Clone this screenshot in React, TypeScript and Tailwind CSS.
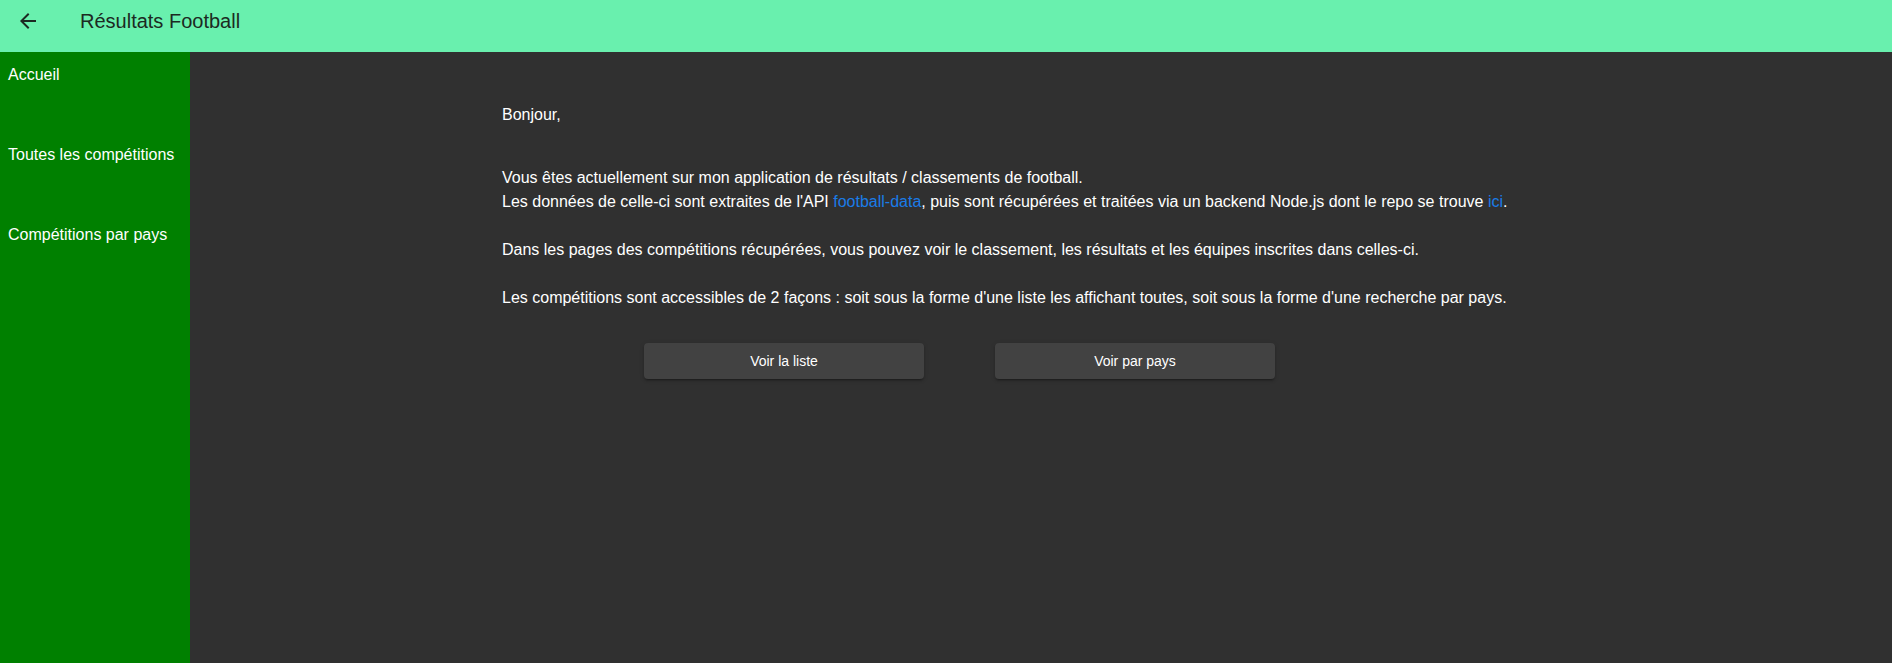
import React from "react";

export default function App() {
  return (
    <div className="flex h-[663px] w-[1892px] flex-col bg-[#303030] font-['Liberation_Sans',Arial,sans-serif] text-white">
      <header className="flex h-[52px] shrink-0 items-center bg-[#69f0ae] text-[#1c2a22]">
        <button className="ml-[16px] flex h-[24px] w-[24px] items-center justify-center -mt-[10px]">
          <svg viewBox="0 0 24 24" width="24" height="24" fill="currentColor">
            <path d="M20 11H7.83l5.59-5.59L12 4l-8 8 8 8 1.41-1.41L7.83 13H20v-2z" />
          </svg>
        </button>
        <h1 className="ml-[40px] -mt-[10px] text-[20px] leading-[24px]">Résultats Football</h1>
      </header>
      <div className="flex flex-1">
        <nav className="flex w-[190px] shrink-0 flex-col bg-[#008000] pt-[11px]">
          <a className="h-[80px] px-[8px] text-[16px] leading-[24px]">Accueil</a>
          <a className="h-[80px] px-[8px] text-[16px] leading-[24px]">Toutes les compétitions</a>
          <a className="h-[80px] px-[8px] text-[16px] leading-[24px]">Compétitions par pays</a>
        </nav>
        <main className="flex-1 pl-[312px] pt-[51px] text-[16px] leading-[24px]">
          <p>Bonjour,</p>
          <div className="mt-[39px]">
            <p>Vous êtes actuellement sur mon application de résultats / classements de football.</p>
            <p>
              Les données de celle-ci sont extraites de l'API{" "}
              <a className="text-[#1a7ce8]">football-data</a>, puis sont récupérées et traitées via un backend Node.js dont le repo se trouve{" "}
              <a className="text-[#1a7ce8]">ici</a>.
            </p>
            <p className="mt-[24px]">Dans les pages des compétitions récupérées, vous pouvez voir le classement, les résultats et les équipes inscrites dans celles-ci.</p>
            <p className="mt-[24px]">Les compétitions sont accessibles de 2 façons : soit sous la forme d'une liste les affichant toutes, soit sous la forme d'une recherche par pays.</p>
          </div>
          <div className="ml-[142px] mt-[33px] flex gap-[71px]">
            <button className="h-[36px] w-[280px] rounded-[4px] bg-[#424242] text-[14px] text-white shadow-[0_3px_1px_-2px_rgba(0,0,0,0.2),0_2px_2px_0_rgba(0,0,0,0.14),0_1px_5px_0_rgba(0,0,0,0.12)]">
              Voir la liste
            </button>
            <button className="h-[36px] w-[280px] rounded-[4px] bg-[#424242] text-[14px] text-white shadow-[0_3px_1px_-2px_rgba(0,0,0,0.2),0_2px_2px_0_rgba(0,0,0,0.14),0_1px_5px_0_rgba(0,0,0,0.12)]">
              Voir par pays
            </button>
          </div>
        </main>
      </div>
    </div>
  );
}
